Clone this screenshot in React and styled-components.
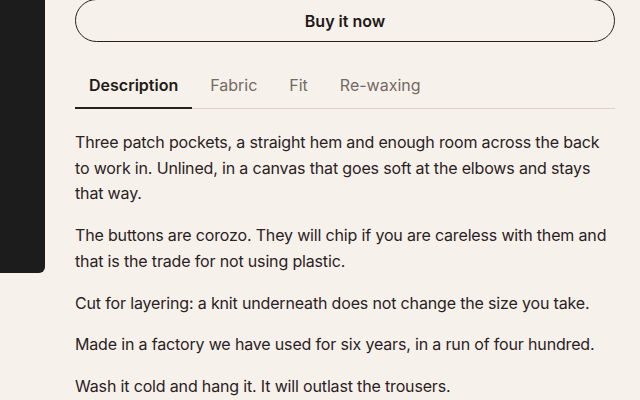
import React, { useState } from "react";
import styled, { createGlobalStyle } from "styled-components";

const GlobalStyle = createGlobalStyle`
  html, body {
    margin: 0;
    padding: 0;
    background: #f7f1eb;
  }
  body {
    font-family: Inter, "Noto Sans", sans-serif;
    color: #2a221f;
    -webkit-font-smoothing: antialiased;
  }
`

const Page = styled.div`
  display: flex;
  align-items: flex-start;
  gap: 30px;
  margin-top: -1px;
  width: 640px;
  height: 401px;
  overflow: hidden;
`

const Gallery = styled.div`
  flex: 0 0 45px;
  height: 274px;
  background: #1b1c1b;
  border-bottom-right-radius: 6px;
`

const Details = styled.div`
  flex: 0 0 540px;
  display: flex;
  flex-direction: column;
`

const BuyButton = styled.button`
  height: 43px;
  width: 100%;
  border: 1px solid #2a1f1c;
  border-radius: 999px;
  background: transparent;
  font-family: inherit;
  font-size: 16px;
  font-weight: 600;
  color: #1f1917;
  cursor: pointer;
`

const TabList = styled.div`
  display: flex;
  gap: 4px;
  margin-top: 19px;
  border-bottom: 1px solid #dcd2cb;
`

const Tab = styled.button`
  padding: 12px 14px 10px;
  margin-bottom: -1px;
  border: none;
  border-bottom: 2px solid ${p => (p.$active ? "#2a1f1c" : "transparent")};
  background: none;
  font-family: inherit;
  font-size: 16px;
  line-height: 24px;
  font-weight: ${p => (p.$active ? 600 : 400)};
  color: ${p => (p.$active ? "#221b18" : "#736a65")};
  cursor: pointer;
`

const Panel = styled.div`
  padding-top: 21px;
`

const Para = styled.p`
  margin: 0 0 16px;
  font-size: 16px;
  letter-spacing: -0.01em;
  line-height: 25.7px;
  color: #2a221f;
`

const tabs = ["Description", "Fabric", "Fit", "Re-waxing"];

const description = [
  "Three patch pockets, a straight hem and enough room across the back to work in. Unlined, in a canvas that goes soft at the elbows and stays that way.",
  "The buttons are corozo. They will chip if you are careless with them and that is the trade for not using plastic.",
  "Cut for layering: a knit underneath does not change the size you take.",
  "Made in a factory we have used for six years, in a run of four hundred.",
  "Wash it cold and hang it. It will outlast the trousers.",
];

export default function App() {
  const [active, setActive] = useState("Description");
  return (
    <>
      <GlobalStyle />
      <Page>
        <Gallery />
        <Details>
          <BuyButton>Buy it now</BuyButton>
          <TabList>
            {tabs.map(t => (
              <Tab key={t} $active={t === active} onClick={() => setActive(t)}>
                {t}
              </Tab>
            ))}
          </TabList>
          <Panel>
            {description.map((d, i) => (
              <Para key={i}>{d}</Para>
            ))}
          </Panel>
        </Details>
      </Page>
    </>
  );
}
